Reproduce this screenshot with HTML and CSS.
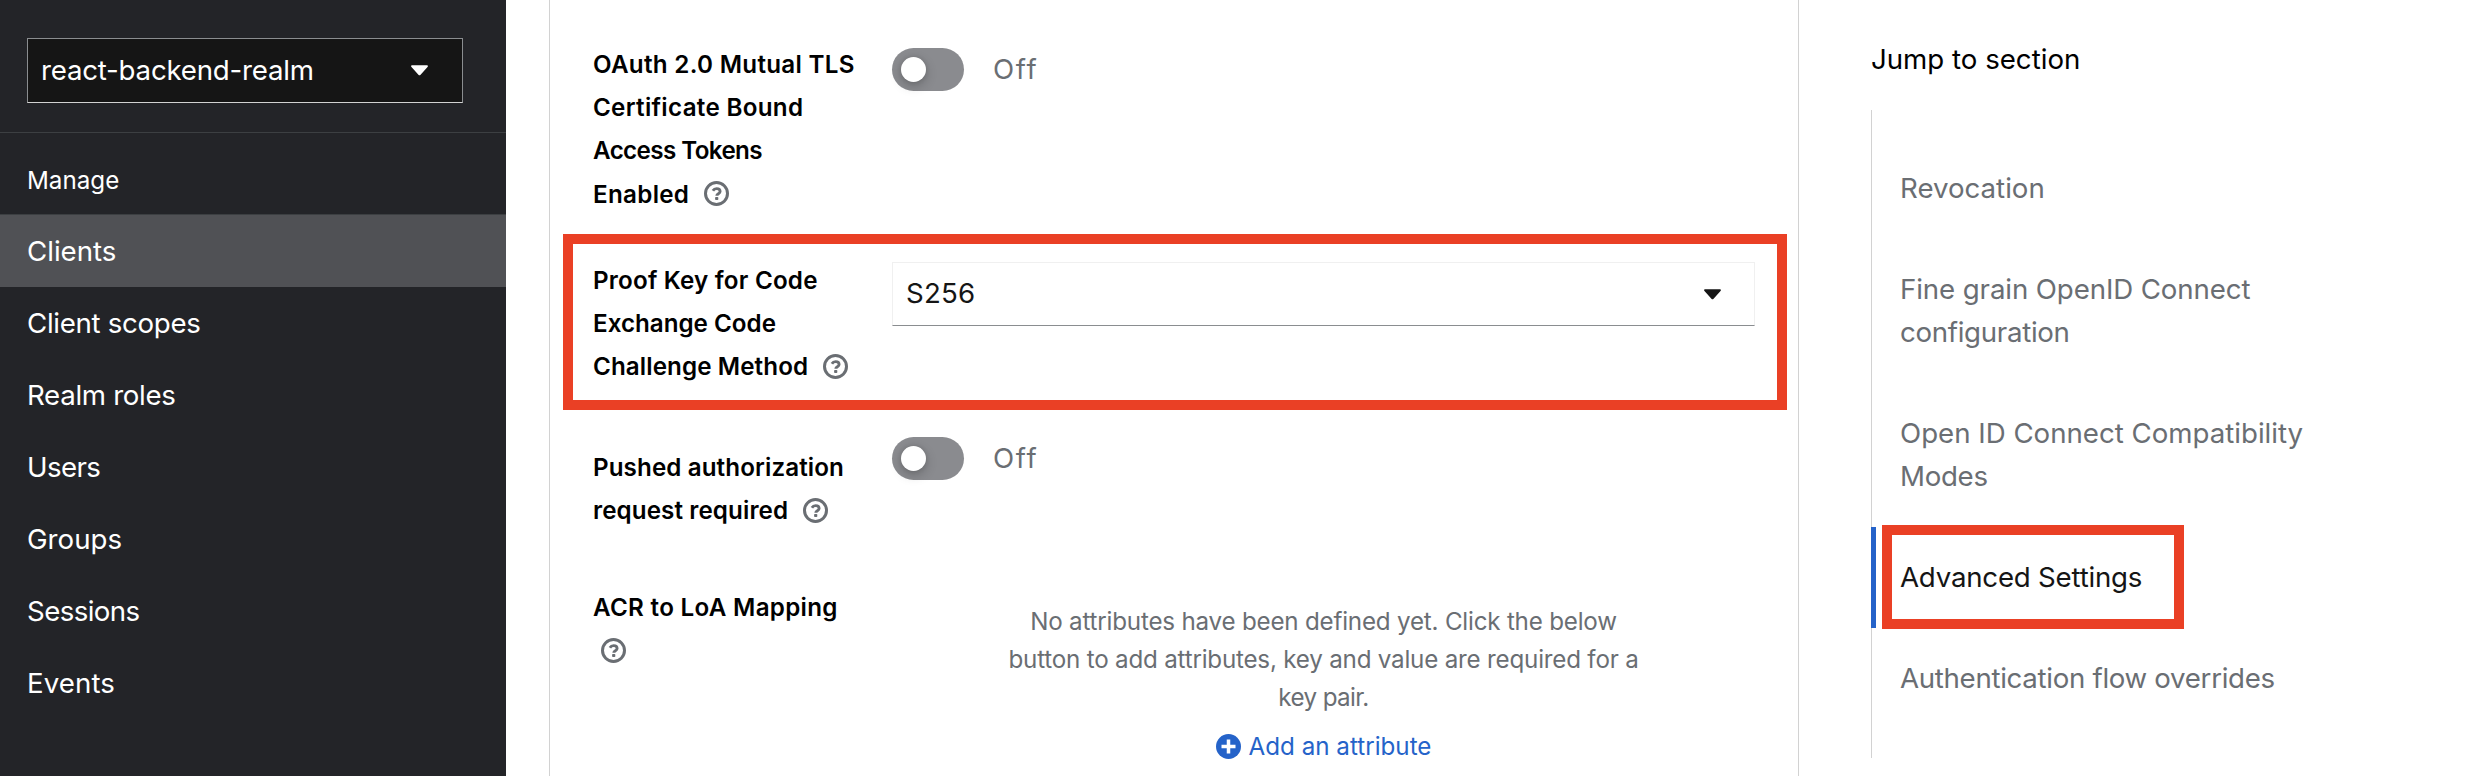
FILE: index.html
```html
<!DOCTYPE html>
<html lang="en">
<head>
<meta charset="utf-8">
<title>Client details</title>
<link rel="stylesheet" href="styles.css">
</head>
<body>
<svg width="0" height="0" class="sprite">
  <symbol id="help" viewBox="0 0 25 25"><circle cx="12.500" cy="12.500" r="11" fill="none" stroke="currentColor" stroke-width="3"/><path d="M8.900 9.800c.9-1.500 2.100-2.200 3.700-2.200 2 0 3.500 1.100 3.500 2.800 0 2.300-3.300 2.200-3.300 4.300" fill="none" stroke="currentColor" stroke-width="2.900"/><rect x="11.100" y="16" width="3.200" height="3" rx=".8" fill="currentColor"/></symbol>
  <symbol id="caret" viewBox="0 0 18 11"><path d="M1.200 0h15.600c1 0 1.400 1.100.7 1.800L9.900 10.200c-.5.600-1.300.6-1.800 0L.5 1.800C-.2 1.100.2 0 1.200 0z"/></symbol>
</svg>
<div class="page">
  <nav class="sidebar">
    <div class="realm">
      <div class="realm-select"><span class="value track-n2">react-backend-realm</span><svg class="caret"><use href="#caret"/></svg></div>
    </div>
    <div class="nav-title">Manage</div>
    <a class="nav-item active">Clients</a>
    <a class="nav-item track-n3">Client scopes</a>
    <a class="nav-item track-n3">Realm roles</a>
    <a class="nav-item track-n6">Users</a>
    <a class="nav-item">Groups</a>
    <a class="nav-item track-n6">Sessions</a>
    <a class="nav-item track-1">Events</a>
  </nav>
  <main class="panel">
    <div class="row row-tls">
      <div class="label">
        <span class="line track-3">OAuth 2.0 Mutual TLS</span>
        <span class="line track-3">Certificate Bound</span>
        <span class="line track-n6">Access Tokens</span>
        <span class="line"><span class="track-3">Enabled</span><svg class="help"><use href="#help"/></svg></span>
      </div>
      <div class="switch"><span class="toggle"><span class="knob"></span></span><span class="state">Off</span></div>
    </div>
    <div class="row row-pkce">
      <div class="label">
        <span class="line track-2">Proof Key for Code</span>
        <span class="line">Exchange Code</span>
        <span class="line"><span class="track-1">Challenge Method</span><svg class="help"><use href="#help"/></svg></span>
      </div>
      <div class="select"><span class="value track-2">S256</span><svg class="caret"><use href="#caret"/></svg></div>
    </div>
    <div class="row row-par">
      <div class="label">
        <span class="line track-1">Pushed authorization</span>
        <span class="line"><span class="track-1">request required</span><svg class="help"><use href="#help"/></svg></span>
      </div>
      <div class="switch"><span class="toggle"><span class="knob"></span></span><span class="state">Off</span></div>
    </div>
    <div class="row row-acr">
      <div class="label">
        <span class="line track-3">ACR to LoA Mapping</span>
        <span class="line"><svg class="help help-alone"><use href="#help"/></svg></span>
      </div>
      <div class="empty">
        <span class="text track-n2">No attributes have been defined yet. Click the below</span>
        <span class="text track-n2">button to add attributes, key and value are required for a</span>
        <span class="text track-n6">key pair.</span>
        <a class="add"><svg class="plus" viewBox="0 0 25 25"><circle cx="12.500" cy="12.500" r="12.500"/><path d="M12.500 5.500v14M5.500 12.500h14"/></svg>Add an attribute</a>
      </div>
    </div>
  </main>
  <aside class="jump">
    <div class="jump-title">Jump to section</div>
    <div class="jump-list">
      <a class="jump-item">Revocation</a>
      <a class="jump-item"><span class="track-n1">Fine grain OpenID Connect</span><br><span class="track-n3">configuration</span></a>
      <a class="jump-item">Open ID Connect Compatibility<br><span class="track-n3">Modes</span></a>
      <a class="jump-item current track-n2">Advanced Settings</a>
      <a class="jump-item track-n3">Authentication flow overrides</a>
    </div>
  </aside>
</div>
</body>
</html>
```
FILE: styles.css
```css
*, *::before, *::after { box-sizing: border-box; }
body {
  margin: 0;
  background: #fff;
  color: #151515;
  font-family: "Inter", sans-serif;
  font-size: 27.65px;
}
.sprite { position: absolute; }
.page { display: flex; width: 2480px; height: 776px; overflow: hidden; }

/* letter spacing steps */
.track-n6 { letter-spacing: -0.6px; }
.track-n3 { letter-spacing: -0.3px; }
.track-n2 { letter-spacing: -0.21px; }
.track-n1 { letter-spacing: -0.1px; }
.track-1 { letter-spacing: 0.1px; }
.track-2 { letter-spacing: 0.2px; }
.track-3 { letter-spacing: 0.3px; }

.caret { width: 17px; height: 11px; fill: currentColor; }
.value { padding-bottom: 2px; }

/* sidebar */
.sidebar { width: 506px; flex: none; background: #232428; color: #fff; }
.realm { height: 133px; padding: 38px 43px 0 27px; border-bottom: 1px solid #3c3f42; }
.realm-select {
  display: flex;
  align-items: center;
  justify-content: space-between;
  height: 65px;
  padding: 0 34px 0 13px;
  background: #151515;
  border: 1px solid #8a8d90;
  border-bottom-color: #d2d2d2;
}
.nav-title { height: 81px; padding-left: 27px; font-size: 24.2px; line-height: 96px; }
.nav-item { display: block; height: 72px; padding-left: 27px; line-height: 73px; }
.nav-item.active { height: 73px; border-top: 1px solid #3c3f42; background: #505155; }

/* settings panel */
.panel {
  width: 1250px;
  flex: none;
  margin-left: 43px;
  border-left: 1px solid #d2d2d2;
  border-right: 1px solid #d2d2d2;
}
.row { display: grid; grid-template-columns: 299px 1fr; padding: 0 43px; }
.row-tls { height: 234px; padding-top: 43px; }
.row-pkce {
  height: 176px;
  margin: 0 11px 0 13px;
  padding: 15px 22px 0 20px;
  border: 10px solid #ea4025;
}
.row-par { height: 140px; padding-top: 27px; }
.row-acr { padding-top: 36px; }
.label { font-size: 24.2px; font-weight: 600; line-height: 43.2px; color: #000; }
.row-par .label { padding-top: 9px; }
.line { display: flex; align-items: center; height: 43.2px; white-space: nowrap; }
.help { width: 25px; height: 25px; margin: -1px 0 0 15px; color: #6a6e73; }
.help-alone { margin-left: 8px; }

.switch { display: flex; align-items: center; height: 43px; gap: 29px; }
.row-tls .switch { margin-top: 5px; }
.toggle {
  width: 72px;
  height: 43px;
  padding: 9px;
  border-radius: 22px;
  background: #8a8b8f;
}
.knob {
  display: block;
  width: 25px;
  height: 25px;
  border-radius: 50%;
  background: #fff;
  box-shadow: 0 4px 12px rgba(3, 3, 3, 0.22), 0 0 5px rgba(3, 3, 3, 0.12);
}
.state { padding-bottom: 2px; color: #6a6e73; letter-spacing: 1.6px; }

.select {
  display: flex;
  align-items: center;
  justify-content: space-between;
  height: 64px;
  margin-top: 3px;
  padding: 0 33px 0 13px;
  border: 1px solid #f0f0f0;
  border-bottom-color: #8a8d90;
}

.empty {
  display: flex;
  flex-direction: column;
  align-items: center;
  padding-top: 17px;
  font-size: 24.2px;
  line-height: 38px;
  color: #6a6e73;
}
.text { white-space: nowrap; }
.add { display: flex; align-items: center; gap: 8px; height: 38px; margin-top: 11px; color: #2563c9; }
.plus { width: 25px; height: 25px; margin-top: -1px; fill: #2563c9; stroke: #fff; stroke-width: 3.500; }
.plus circle { stroke: none; }

/* section links */
.jump { margin-left: 72px; white-space: nowrap; }
.jump-title { height: 110px; padding-top: 38px; line-height: 43px; color: #000; }
.jump-list { height: 648px; padding-top: 28.4px; border-left: 1px solid #d2d2d2; }
.jump-item { display: block; padding: 28.8px 0 28.8px 28px; line-height: 43.2px; color: #6a6e73; }
.jump-item.current { position: relative; color: #151515; }
.jump-item.current::before {
  content: "";
  position: absolute;
  left: -1px;
  top: 0;
  width: 5px;
  height: 101px;
  background: #2563c9;
}
.jump-item.current::after {
  content: "";
  position: absolute;
  left: 10px;
  top: -2px;
  width: 302px;
  height: 104px;
  border: 10px solid #ea4025;
}
```
